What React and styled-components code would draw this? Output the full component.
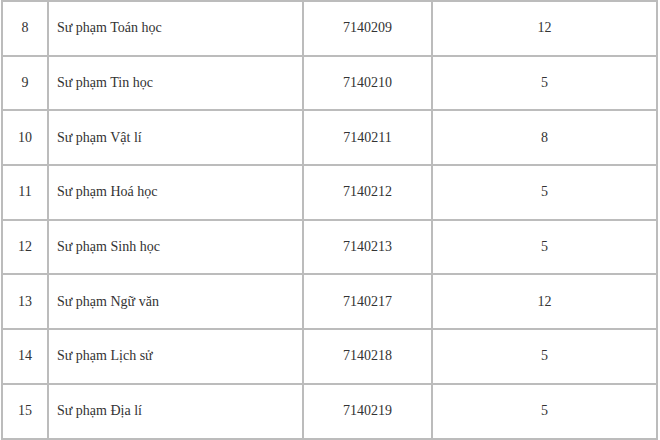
import styled, { createGlobalStyle } from 'styled-components';

const GlobalStyle = createGlobalStyle`
  html, body {
    margin: 0;
    padding: 0;
    background: #fff;
  }
`;

const StyledTable = styled.table`
  table-layout: fixed;
  border-collapse: collapse;
  width: 657px;
  margin-left: 1px;
  font-family: 'Liberation Serif', 'Times New Roman', serif;
  font-size: 14px;
  color: #333;
`;

const StyledCol = styled.col`
  width: ${({ $width }) => $width}px;
`;

const StyledRow = styled.tr`
  height: 54.7px;
`;

const StyledCell = styled.td`
  border: 2px solid #bcbcbc;
  padding: 0 8px;
  vertical-align: middle;
  text-align: ${({ $align }) => $align || 'center'};
`;

const columns = [46, 255, 129, 225];

const rows = [
  { id: 8, name: 'Sư phạm Toán học', code: '7140209', quota: 12 },
  { id: 9, name: 'Sư phạm Tin học', code: '7140210', quota: 5 },
  { id: 10, name: 'Sư phạm Vật lí', code: '7140211', quota: 8 },
  { id: 11, name: 'Sư phạm Hoá học', code: '7140212', quota: 5 },
  { id: 12, name: 'Sư phạm Sinh học', code: '7140213', quota: 5 },
  { id: 13, name: 'Sư phạm Ngữ văn', code: '7140217', quota: 12 },
  { id: 14, name: 'Sư phạm Lịch sử', code: '7140218', quota: 5 },
  { id: 15, name: 'Sư phạm Địa lí', code: '7140219', quota: 5 },
];

const App = () => {
  return (
    <>
      <GlobalStyle />
      <StyledTable>
        <colgroup>
          {columns.map((width, i) => (
            <StyledCol key={i} $width={width} />
          ))}
        </colgroup>
        <tbody>
          {rows.map((row) => (
            <StyledRow key={row.id}>
              <StyledCell>{row.id}</StyledCell>
              <StyledCell $align='left'>{row.name}</StyledCell>
              <StyledCell>{row.code}</StyledCell>
              <StyledCell>{row.quota}</StyledCell>
            </StyledRow>
          ))}
        </tbody>
      </StyledTable>
    </>
  );
};

export default App;
